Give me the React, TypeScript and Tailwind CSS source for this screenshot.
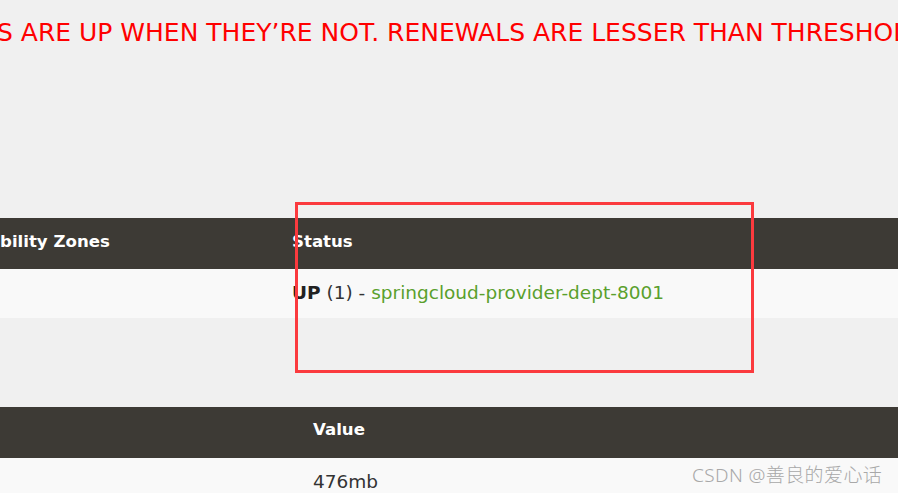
import React from "react";

export default function App() {
  const font = { fontFamily: '"DejaVu Sans", "Noto Sans", sans-serif' };
  return (
    <div
      className="relative w-[898px] h-[493px] overflow-hidden bg-[#f0f0f0] text-[#333]"
      style={font}
    >
      <div className="h-[218px] pt-[14px]">
        <div className="ml-[-3px] whitespace-nowrap text-[25px] leading-[38px] text-[#ff0000]">
          S ARE UP WHEN THEY’RE NOT. RENEWALS ARE LESSER THAN THRESHOLD
        </div>
      </div>

      <div className="grid grid-cols-[292px_1fr] h-[51px] items-center pb-[3px] bg-[#3d3a35] text-white font-bold text-[16.6px]">
        <div className="whitespace-nowrap">bility Zones</div>
        <div>Status</div>
      </div>
      <div className="grid grid-cols-[292px_1fr] h-[49px] items-center pb-[2px] bg-[#f9f9f9] text-[18.5px]">
        <div></div>
        <div className="whitespace-nowrap">
          <b className="font-bold text-[#222]">UP</b> (1) -{" "}
          <span className="text-[#5aa02c]">springcloud-provider-dept-8001</span>
        </div>
      </div>

      <div className="h-[89px]"></div>

      <div className="grid grid-cols-[313px_1fr] h-[51px] items-center pb-[4px] bg-[#3d3a35] text-white font-bold text-[16.6px]">
        <div></div>
        <div>Value</div>
      </div>
      <div className="grid grid-cols-[313px_1fr] h-[49px] items-center pb-[2px] bg-[#f9f9f9] text-[18.5px]">
        <div></div>
        <div>476mb</div>
      </div>

      <div className="absolute left-[295px] top-[202px] w-[459px] h-[171px] border-[3px] border-[#fb3a3e]"></div>

      <div
        className="absolute left-[692px] top-[462px] text-[19px] leading-[26px] text-[#a8a8a8] whitespace-nowrap font-light tracking-[0.4px]"
        style={{ fontFamily: '"Noto Sans", "Noto Sans CJK SC", sans-serif' }}
      >
        CSDN @善良的爱心话
      </div>
    </div>
  );
}
